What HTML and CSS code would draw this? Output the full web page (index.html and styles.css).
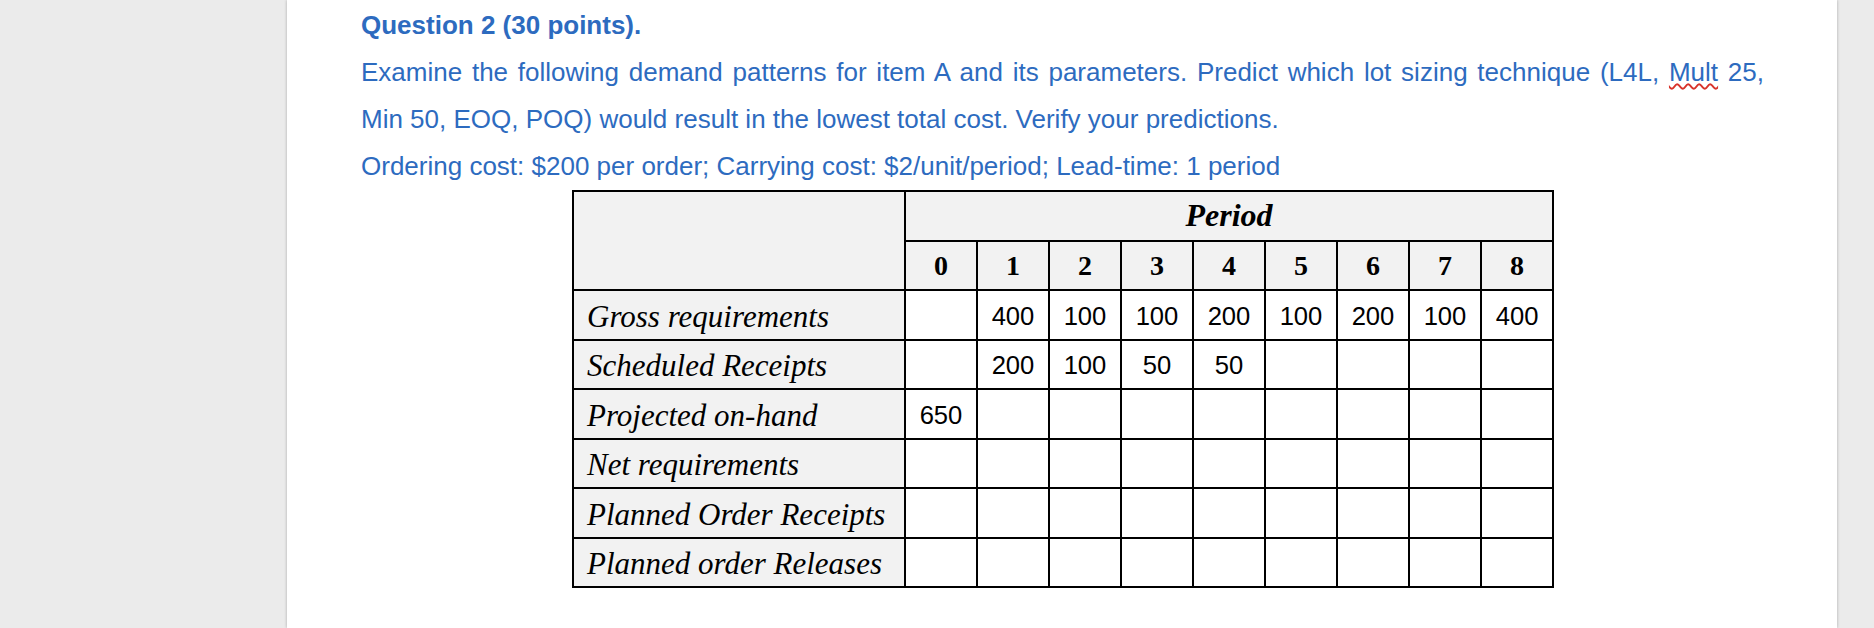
FILE: index.html
```html
<!DOCTYPE html>
<html lang="en">
<head>
<meta charset="utf-8">
<title>Question 2</title>
<link rel="stylesheet" href="styles.css">
</head>
<body>
<div class="page">
  <div class="content">
    <h2 class="heading">Question 2 (30 points).</h2>
    <p class="para">
      <span class="line-justify">Examine the following demand patterns for item A and its parameters. Predict which lot sizing technique (L4L, <span class="spell">Mult</span> 25,</span>
      <span class="line">Min 50, EOQ, POQ) would result in the lowest total cost. Verify your predictions.</span>
    </p>
    <p class="para">Ordering cost: $200 per order; Carrying cost: $2/unit/period; Lead-time: 1 period</p>

    <table class="mrp">
      <colgroup>
        <col class="c-label">
        <col class="c-num"><col class="c-num"><col class="c-num"><col class="c-num"><col class="c-num">
        <col class="c-num"><col class="c-num"><col class="c-num"><col class="c-num">
      </colgroup>
      <thead>
        <tr>
          <th class="head-blank" rowspan="2"></th>
          <th class="period" colspan="9">Period</th>
        </tr>
        <tr class="periods">
          <th>0</th><th>1</th><th>2</th><th>3</th><th>4</th><th>5</th><th>6</th><th>7</th><th>8</th>
        </tr>
      </thead>
      <tbody>
        <tr>
          <th class="label">Gross requirements</th>
          <td></td><td>400</td><td>100</td><td>100</td><td>200</td><td>100</td><td>200</td><td>100</td><td>400</td>
        </tr>
        <tr>
          <th class="label">Scheduled Receipts</th>
          <td></td><td>200</td><td>100</td><td>50</td><td>50</td><td></td><td></td><td></td><td></td>
        </tr>
        <tr>
          <th class="label">Projected on-hand</th>
          <td>650</td><td></td><td></td><td></td><td></td><td></td><td></td><td></td><td></td>
        </tr>
        <tr>
          <th class="label">Net requirements</th>
          <td></td><td></td><td></td><td></td><td></td><td></td><td></td><td></td><td></td>
        </tr>
        <tr>
          <th class="label">Planned Order Receipts</th>
          <td></td><td></td><td></td><td></td><td></td><td></td><td></td><td></td><td></td>
        </tr>
        <tr>
          <th class="label">Planned order Releases</th>
          <td></td><td></td><td></td><td></td><td></td><td></td><td></td><td></td><td></td>
        </tr>
      </tbody>
    </table>
  </div>
</div>
</body>
</html>
```

FILE: styles.css
```css
html, body {
  margin: 0;
  padding: 0;
}

body {
  background: #ebebeb;
  height: 628px;
  overflow: hidden;
  font-family: "Liberation Sans", Arial, sans-serif;
}

.page {
  margin-left: 287px;
  width: 1550px;
  min-height: 628px;
  background: #ffffff;
  box-shadow: 0 0 3px rgba(0, 0, 0, 0.28);
}

.content {
  padding: 2px 0 0 74px;
}

.heading {
  margin: 0;
  font-size: 26px;
  line-height: 47px;
  font-weight: bold;
  color: #2d6bbf;
}

.para {
  margin: 0;
  width: 1403px;
  font-size: 26px;
  line-height: 47px;
  color: #2d6bbf;
}

.line-justify {
  display: block;
  white-space: nowrap;
  text-align: justify;
  text-align-last: justify;
}

.line {
  display: block;
}

.spell {
  text-decoration: underline wavy #d8322a;
  text-decoration-thickness: 1.5px;
  text-underline-offset: 2px;
}

.mrp {
  margin-left: 211px;
  border-collapse: collapse;
  table-layout: fixed;
  width: 980px;
  color: #000;
}

.c-label {
  width: 332px;
}

.c-num {
  width: 72px;
}

.mrp th,
.mrp td {
  border: 2px solid #000;
  padding: 0;
  height: 47.5px;
  text-align: center;
  vertical-align: middle;
}

.mrp thead th {
  background: #f2f2f2;
}

.period {
  font-family: "Liberation Serif", "Times New Roman", serif;
  font-style: italic;
  font-weight: bold;
  font-size: 32px;
}

.mrp .periods th {
  font-family: "Liberation Serif", "Times New Roman", serif;
  font-weight: bold;
  font-size: 28px;
  padding-top: 2px;
  height: 45.5px;
}

.mrp td {
  font-family: "Liberation Sans", Arial, sans-serif;
  font-size: 25.6px;
  background: #ffffff;
  padding-top: 3px;
  height: 44.5px;
}

.mrp .label {
  background: #f2f2f2;
  text-align: left;
  padding: 4px 0 0 13px;
  height: 43.5px;
  font-family: "Liberation Serif", "Times New Roman", serif;
  font-style: italic;
  font-weight: normal;
  font-size: 31px;
  white-space: nowrap;
}
```
